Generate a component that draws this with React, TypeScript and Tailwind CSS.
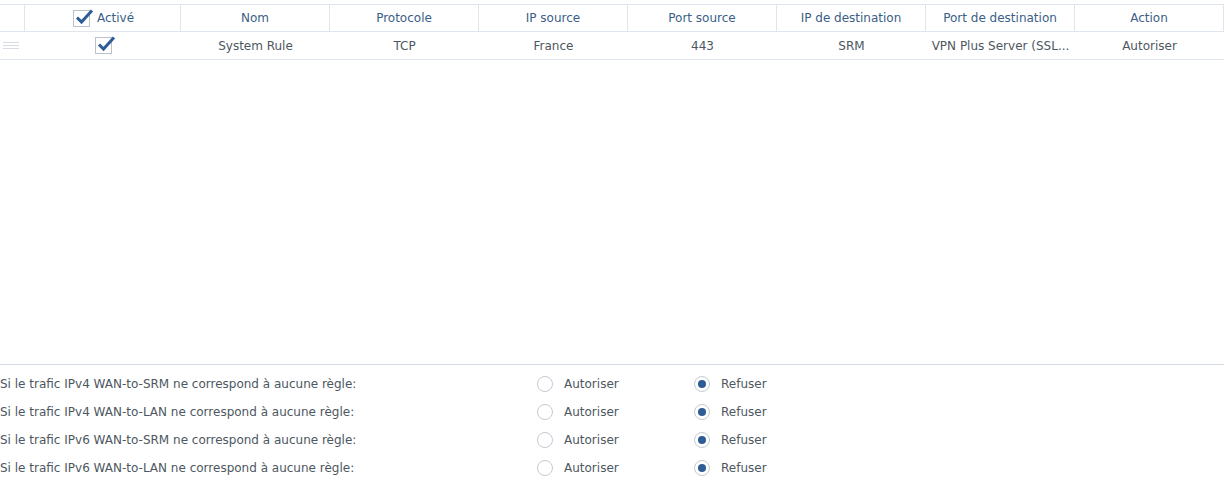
import React from 'react';

const columns = ['Nom', 'Protocole', 'IP source', 'Port source', 'IP de destination', 'Port de destination', 'Action'];
const row = ['System Rule', 'TCP', 'France', '443', 'SRM', 'VPN Plus Server (SSL...', 'Autoriser'];

const policies = [
  'Si le trafic IPv4 WAN-to-SRM ne correspond à aucune règle:',
  'Si le trafic IPv4 WAN-to-LAN ne correspond à aucune règle:',
  'Si le trafic IPv6 WAN-to-SRM ne correspond à aucune règle:',
  'Si le trafic IPv6 WAN-to-LAN ne correspond à aucune règle:',
];

function Check() {
  return (
    <span className="relative inline-block w-[17px] h-[17px] border border-[#b8c2cc] bg-white">
      <svg className="absolute -top-[3px] left-[1px]" width="19" height="17" viewBox="0 0 19 17">
        <path d="M2 9.5 L6.5 14 L17 2.5" fill="none" stroke="#2e5c96" strokeWidth="3" strokeLinejoin="miter" />
      </svg>
    </span>
  );
}

function Radio({ on }: { on?: boolean }) {
  return (
    <span className="w-4 h-4 rounded-full border border-[#c2cbd4] bg-white flex items-center justify-center">
      {on && <span className="w-2 h-2 rounded-full bg-[#2e5c96]" />}
    </span>
  );
}

export default function App() {
  return (
    <div className="w-[1224px] h-[479px] bg-white flex flex-col text-[12px] text-[#4d5761] font-['DejaVu_Sans',Verdana,sans-serif] overflow-hidden">
      <div className="pt-1 h-[364px] shrink-0">
        <div className="w-[1224px] border-t border-[#dfe5ec]">
          <div className="flex h-[27px] border-b border-[#dfe5ec] text-[#3a5e86]">
            <div className="w-[25px] shrink-0 border-r border-[#dfe5ec]" />
            <div className="w-[156px] shrink-0 border-r border-[#dfe5ec] flex items-center justify-center gap-[7px] pl-[2px]">
              <Check />
              <span>Activé</span>
            </div>
            {columns.map((c) => (
              <div key={c} className="w-[149px] shrink-0 flex items-center justify-center border-r border-[#dfe5ec]">
                {c}
              </div>
            ))}
          </div>
          <div className="flex h-[28px] border-b border-[#dfe5ec]">
            <div className="w-[25px] shrink-0 flex flex-col justify-center gap-[2px] pl-[3px]">
              <span className="w-4 h-px bg-[#d6dce2]" />
              <span className="w-4 h-px bg-[#d6dce2]" />
              <span className="w-4 h-px bg-[#d6dce2]" />
            </div>
            <div className="w-[156px] shrink-0 flex items-center justify-center">
              <Check />
            </div>
            {row.map((c, i) => (
              <div key={i} className="w-[149px] shrink-0 flex items-center justify-center whitespace-nowrap">
                {c}
              </div>
            ))}
          </div>
        </div>
      </div>
      <div className="border-t border-[#d4dbe2] pt-[5px] flex flex-col shrink-0">
        {policies.map((p) => (
          <div key={p} className="h-[28px] flex items-center">
            <span className="w-[537px]">{p}</span>
            <div className="w-[157px] flex items-center gap-[11px]">
              <Radio />
              <span>Autoriser</span>
            </div>
            <div className="flex items-center gap-[11px]">
              <Radio on />
              <span>Refuser</span>
            </div>
          </div>
        ))}
      </div>
    </div>
  );
}
